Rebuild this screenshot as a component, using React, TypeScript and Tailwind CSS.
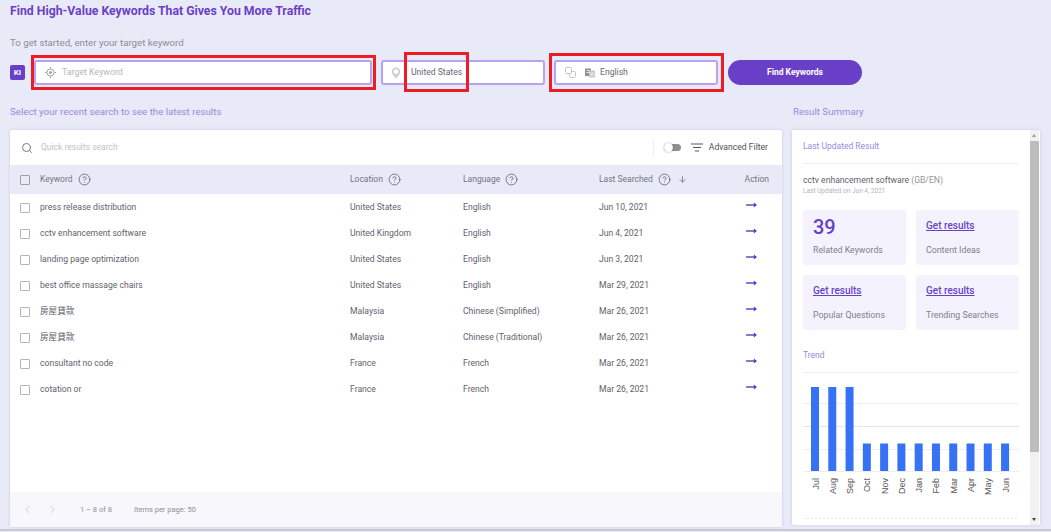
import React from "react";
import { Search, ChevronLeft, ChevronRight, ArrowDown, CircleHelp } from "lucide-react";

const rows = [
  ["press release distribution", "United States", "English", "Jun 10, 2021"],
  ["cctv enhancement software", "United Kingdom", "English", "Jun 4, 2021"],
  ["landing page optimization", "United States", "English", "Jun 3, 2021"],
  ["best office massage chairs", "United States", "English", "Mar 29, 2021"],
  ["房屋貸款", "Malaysia", "Chinese (Simplified)", "Mar 26, 2021"],
  ["房屋貸款", "Malaysia", "Chinese (Traditional)", "Mar 26, 2021"],
  ["consultant no code", "France", "French", "Mar 26, 2021"],
  ["cotation or", "France", "French", "Mar 26, 2021"],
];
const months = ["Jul", "Aug", "Sep", "Oct", "Nov", "Dec", "Jan", "Feb", "Mar", "Apr", "May", "Jun"];

function Arrow() {
  return (
    <svg width="11" height="6" viewBox="0 0 11 6" className="block text-[#5f3cc0]">
      <path d="M0 3h9.5" stroke="currentColor" strokeWidth="1.4" />
      <path d="M7.8 0.6L11 3L7.8 5.4z" fill="currentColor" />
    </svg>
  );
}

function Help() {
  return <CircleHelp size={13} strokeWidth={1.5} className="text-[#5f616c]" />;
}

function TargetIcon() {
  return (
    <svg width="11" height="11" viewBox="0 0 11 11" fill="none" stroke="#a3a3aa" strokeWidth="1">
      <circle cx="5.5" cy="5.5" r="3.6" />
      <circle cx="5.5" cy="5.5" r="1.5" fill="#a3a3aa" stroke="none" />
      <path d="M5.5 0v1.6M5.5 9.4V11M0 5.5h1.6M9.4 5.5H11" />
    </svg>
  );
}

function PinIcon() {
  return (
    <svg width="10" height="12" viewBox="0 0 10 12">
      <path d="M5 .6C2.5.6.8 2.4.8 4.7c0 2.6 2.4 4.9 4.2 6.7 1.8-1.8 4.2-4.1 4.2-6.7C9.2 2.4 7.5.6 5 .6z" fill="#cfcfd4" />
      <circle cx="5" cy="4.7" r="2.4" fill="#ffffff" />
    </svg>
  );
}

function TranslateIcon({ color, size = 11 }: { color: string; size?: number }) {
  return (
    <svg width={size} height={size} viewBox="0 0 11 11" fill="#ffffff" stroke={color} strokeWidth="1">
      <rect x="4.5" y="4.5" width="6" height="6" rx="1.2" />
      <rect x="0.5" y="0.5" width="6" height="6" rx="1.2" />
    </svg>
  );
}

function DictIcon() {
  return (
    <svg width="10" height="10" viewBox="0 0 10 10">
      <rect x="0" y="0.5" width="6" height="7.5" fill="#8f9096" />
      <rect x="4" y="2.5" width="6" height="7" fill="#c9cace" />
      <path d="M1.5 2.5h3M1.5 4.5h3M5.5 5h3M5.5 7h3" stroke="#ffffff" strokeWidth="0.8" />
    </svg>
  );
}

function FilterIcon() {
  return (
    <svg width="12" height="9" viewBox="0 0 12 9" className="mr-[6px]">
      <path d="M0 1h12M2 4.5h8M4 8h4" stroke="#55565f" strokeWidth="1.2" />
    </svg>
  );
}

function Tile({ big, link, label }: { big?: string; link?: string; label: string }) {
  return (
    <div className="flex h-[55px] flex-col rounded-[3px] bg-[#f4f3fd] pl-[10px]">
      {big ? (
        <div className="h-[31px] pt-[6px] text-[20px] leading-[22px] font-medium text-[#6a3fc8]">{big}</div>
      ) : (
        <div className="h-[31px] pt-[9px] text-[10px] leading-[14px] font-medium text-[#6a3fc8] underline">{link}</div>
      )}
      <div className="pt-[2px] text-[8.8px] leading-[14px] text-[#7d7f8a]">{label}</div>
    </div>
  );
}

function Chart() {
  return (
    <svg width="216" height="148" viewBox="0 0 216 148" className="mt-[11px] block">
      {[0, 31, 54, 77, 99].map((y) => (
        <line key={y} x1="0" x2="216" y1={y + 0.5} y2={y + 0.5} stroke={y === 54 ? "#e6e6e6" : "#eeeeee"} strokeWidth="1" />
      ))}
      {months.map((m, i) => {
        const x = 8 + i * 17.28;
        const top = i < 3 ? 15 : 71.5;
        return (
          <g key={m}>
            <rect x={x} y={top} width="8" height={99 - top} fill="#3772f5" />
            <text
              transform={`translate(${x + 7.5} 106) rotate(-90)`}
              textAnchor="end"
              fontSize="9"
              fill="#555555"
              fontFamily="'Liberation Sans', Arial, sans-serif"
            >
              {m}
            </text>
          </g>
        );
      })}
      <line x1="0" x2="216" y1="146.5" y2="146.5" stroke="#e8e8e8" strokeDasharray="2 2" />
    </svg>
  );
}

export default function App() {
  return (
    <div
      className="relative h-[532px] w-[1051px] overflow-hidden bg-[#e9eaf7] pl-[10px]"
      style={{ fontFamily: "Roboto, 'Noto Sans CJK TC', sans-serif" }}
    >
      <h1 className="pt-[4px] text-[12.25px] leading-[15px] font-bold text-[#6a3fc8]">
        Find High-Value Keywords That Gives You More Traffic
      </h1>
      <p className="mt-[17px] text-[9.7px] leading-[13px] text-[#8b8d98]">To get started, enter your target keyword</p>

      <div className="mt-[11px] flex h-[25px] items-center">
        <div className="flex h-[15px] w-[15px] items-center justify-center rounded-[2px] bg-[#6a3fc8] text-[8px] font-bold text-white">KI</div>
        <div className="ml-[9px] flex h-[25px] w-[338px] items-center rounded-[3px] border-2 border-[#b7a3f0] bg-white pl-[9px]">
          <TargetIcon />
          <span className="ml-[6px] text-[8.8px] text-[#b6b7c0]">Target Keyword</span>
        </div>
        <div className="ml-[9px] flex h-[25px] w-[164px] items-center rounded-[3px] border-2 border-[#b7a3f0] bg-white pl-[8px]">
          <PinIcon />
          <span className="ml-[10px] text-[8.6px] text-[#666873]">United States</span>
        </div>
        <div className="ml-[9px] flex h-[25px] w-[164px] items-center rounded-[3px] border-2 border-[#b7a3f0] bg-white pl-[9px]">
          <TranslateIcon color="#c4c4c9" />
          <span className="ml-[9px]"><DictIcon /></span>
          <span className="ml-[5px] text-[8.6px] text-[#666873]">English</span>
        </div>
        <div className="ml-[10px] flex h-[25px] w-[134px] items-center justify-center rounded-full bg-[#6a3fc8] text-[8.5px] font-bold text-white">
          Find Keywords
        </div>
      </div>

      <div className="mt-[20px] flex h-[13px] text-[9.7px] leading-[13px] text-[#9c86e4]">
        <span className="w-[783px]">Select your recent search to see the latest results</span>
        <span>Result Summary</span>
      </div>

      <div className="mt-[12px] flex gap-[10px]">
        {/* Results table */}
        <div className="flex h-[397px] w-[772px] flex-col rounded-[2px] bg-white shadow-[0_0_3px_rgba(120,120,160,0.3)]">
          <div className="flex h-[35px] items-center pl-[11px] pr-[14px]">
            <Search size={12} strokeWidth={1.9} className="text-[#6f717b]" />
            <span className="ml-[8px] text-[8.5px] text-[#c0c1c8]">Quick results search</span>
            <div className="ml-auto mr-[10px] h-[16px] w-px bg-[#f0f0f3]" />
            <div className="relative mr-[10px] h-[7px] w-[17px] rounded-full bg-[#8f8f8f]">
              <div className="absolute left-0 top-[-1px] h-[9px] w-[9px] rounded-full bg-white shadow-[0_0_2px_rgba(0,0,0,0.4)]" />
            </div>
            <FilterIcon />
            <span className="text-[8.6px] text-[#4f505a]">Advanced Filter</span>
          </div>

          <div className="flex h-[29px] items-center bg-[#e9eaf7] pl-[10px] pr-[13px] text-[8.5px] text-[#73757f]">
            <div className="h-[10px] w-[10px] rounded-[1px] border border-[#9d9ea6]" />
            <div className="ml-[10px] flex w-[310px] items-center gap-[5px]">Keyword <Help /></div>
            <div className="flex w-[113px] items-center gap-[5px]">Location <Help /></div>
            <div className="flex w-[136px] items-center gap-[5px]">Language <Help /></div>
            <div className="flex items-center gap-[5px]">
              Last Searched <Help />
              <ArrowDown size={9} strokeWidth={2.2} className="ml-[2px] text-[#6f7280]" />
            </div>
            <div className="ml-auto">Action</div>
          </div>

          {rows.map((r, i) => (
            <div key={i} className="flex h-[26px] shrink-0 items-center pl-[10px] pr-[25px] pt-[1px] text-[8.6px] text-[#5f616c]">
              <div className="h-[10px] w-[10px] rounded-[1px] border border-[#b5b5ba]" />
              <div className="ml-[10px] w-[310px]">{r[0]}</div>
              <div className="w-[113px]">{r[1]}</div>
              <div className="w-[136px]">{r[2]}</div>
              <div>{r[3]}</div>
              <div className="ml-auto -mt-[6px]"><Arrow /></div>
            </div>
          ))}

          <div className="mt-auto flex h-[35px] items-center bg-[#f7f7fc] pl-[11px] text-[7.5px] text-[#8f9099]">
            <ChevronLeft size={13} strokeWidth={1.2} className="text-[#b9bac2]" />
            <ChevronRight size={13} strokeWidth={1.2} className="ml-[12px] text-[#b9bac2]" />
            <span className="ml-[21px]">1 – 8 of 8</span>
            <span className="ml-[22px]">Items per page: 50</span>
          </div>
        </div>

        {/* Result summary */}
        <div className="flex h-[395px] w-[248px] rounded-[2px] bg-white shadow-[0_0_3px_rgba(120,120,160,0.3)]">
          <div className="w-[238px] px-[11px] pt-[9px]">
            <div className="h-[15px] text-[8.5px] leading-[14px] text-[#9c86e4]">Last Updated Result</div>
            <div className="mt-[9px] h-px bg-[#eeeeee]" />
            <div className="mt-[10px] text-[8.6px] leading-[12px] text-[#5f616c]">
              cctv enhancement software <span className="text-[#94959e]">(GB/EN)</span>
            </div>
            <div className="mt-[1px] text-[6.5px] leading-[9px] text-[#b3b4bb]">Last Updated on Jun 4, 2021</div>
            <div className="mt-[14px] grid grid-cols-2 gap-[10px]">
              <Tile big="39" label="Related Keywords" />
              <Tile link="Get results" label="Content Ideas" />
              <Tile link="Get results" label="Popular Questions" />
              <Tile link="Get results" label="Trending Searches" />
            </div>
            <div className="mt-[19px] text-[8.5px] leading-[12px] text-[#9c86e4]">Trend</div>
            <Chart />
          </div>
          <div className="relative h-full w-[9px] bg-[#f1f1f1]">
            <div className="absolute left-0 top-[11px] h-[311px] w-[9px] bg-[#bdbdbd]" />
            <div className="absolute left-[2px] top-[4px] h-0 w-0 border-x-[2.5px] border-b-[3px] border-x-transparent border-b-[#9a9a9a]" />
            <div className="absolute bottom-[4px] left-[2px] h-0 w-0 border-x-[2.5px] border-t-[3px] border-x-transparent border-t-[#444444]" />
          </div>
        </div>
      </div>

      {/* Red annotation boxes drawn over the screenshot */}
      <div className="absolute left-[31px] top-[55px] h-[35px] w-[345px] border-[3px] border-[#ee1c25]" />
      <div className="absolute left-[404px] top-[52px] h-[40px] w-[65px] border-[3px] border-[#ee1c25]" />
      <div className="absolute left-[549px] top-[53px] h-[39px] w-[175px] border-[3px] border-[#ee1c25]" />
      <div className="absolute bottom-[1px] left-0 h-[2px] w-full bg-[#c9cad3]" />
    </div>
  );
}
